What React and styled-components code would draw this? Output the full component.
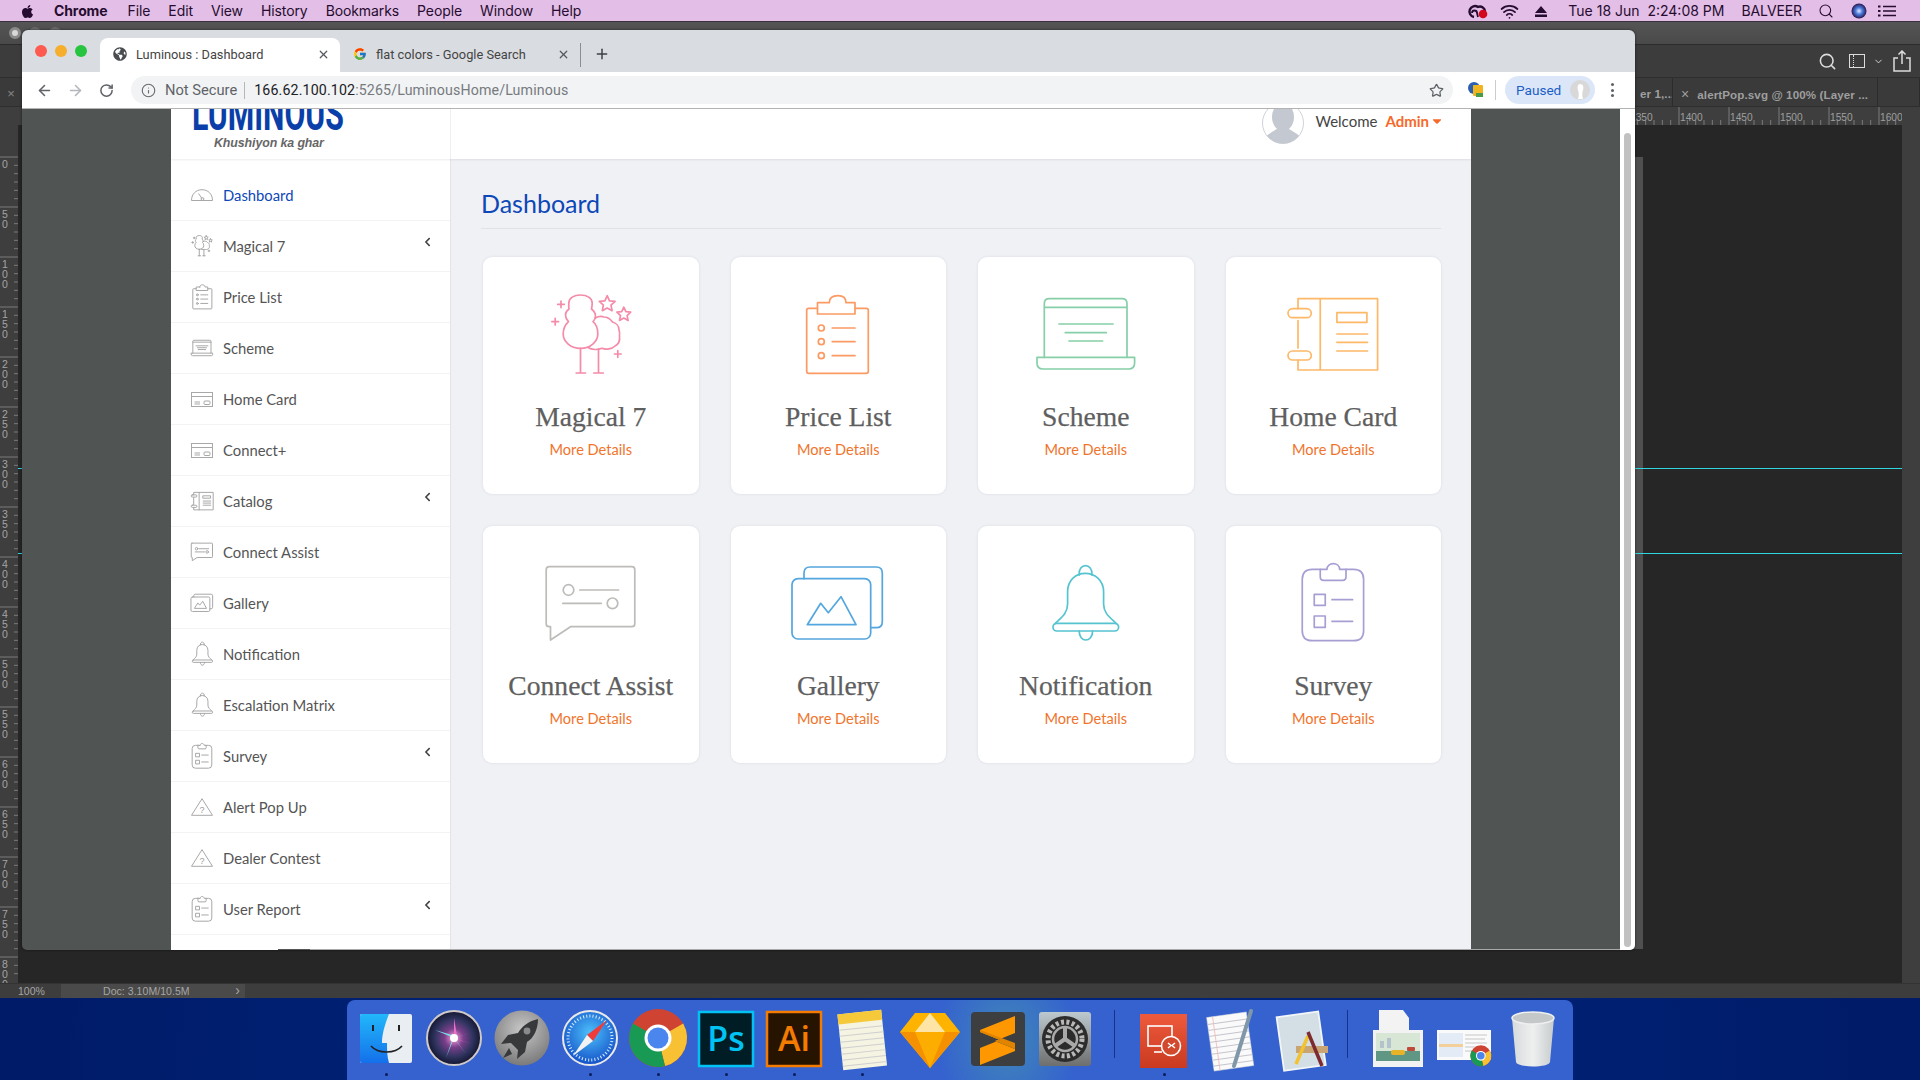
import React from "react";
import styled, { createGlobalStyle } from "styled-components";
import { ArrowLeft, ArrowRight, RotateCw, Info, Star, X, Plus, Search, Wifi, ChevronDown } from "lucide-react";
import { FaApple, FaGlobeAmericas, FaChevronLeft, FaCaretDown } from "react-icons/fa";
import { FcGoogle } from "react-icons/fc";

const Global = createGlobalStyle`
  html, body { margin: 0; padding: 0; background: #001e6e; }
  * { box-sizing: border-box; }
`;

/* ---------- desktop frame ---------- */
const Desktop = styled.div`
  width: 1920px; height: 1080px; overflow: hidden;
  display: flex; flex-direction: column;
  background: radial-gradient(ellipse at 50% 100%, #00267f 0%, #001e6e 55%, #00165a 100%);
  font-family: "Lato", "Liberation Sans", sans-serif;
`;
const MenuBar = styled.header`
  height: 22px; flex: none; display: flex; align-items: center;
  background: #e3bee6; color: #260c30;
  font: 14px/22px "Inter", "Liberation Sans", sans-serif;
  padding-left: 20px; box-shadow: inset 0 -1px 0 #3a3040;
`;
const MenuItem = styled.span`
  margin-right: ${p => p.$gap ?? 18}px;
  font-weight: ${p => (p.$bold ? 700 : 400)};
  white-space: nowrap; letter-spacing: ${p => p.$ls ?? -0.1}px;
`;
const MenuRight = styled.div`
  margin-left: auto; display: flex; align-items: center; padding-right: 24px;
`;
const MenuGlyph = styled.span`
  display: inline-flex; align-items: center; justify-content: center;
  margin-right: ${p => p.$gap ?? 12}px;
`;

/* ---------- photoshop window behind ---------- */
const Workspace = styled.main`
  position: relative; flex: none; height: 976px;
`;
const PsWindow = styled.section`
  height: 100%; display: flex; flex-direction: column; background: #3d3d3d; color: #a8a8a8;
`;
const PsTitle = styled.div`
  height: 23px; flex: none; display: flex; align-items: center; padding-left: 9px; gap: 8px;
  background: linear-gradient(#555, #4a4a4a); border-bottom: 1px solid #2c2c2c;
`;
const PsDot = styled.i`
  width: 12px; height: 12px; border-radius: 50%;
  background: ${p => (p.$on ? "#d8d8d8" : "#6c6c6c")};
  border: ${p => (p.$on ? "3px solid #8a8a8a" : "none")};
`;
const PsOptions = styled.div`
  height: 33px; flex: none; display: flex; align-items: center; justify-content: flex-end;
  padding-right: 9px; background: #3c3c3c; color: #dcdcdc; border-bottom: 1px solid #2e2e2e;
`;
const PsOptIcon = styled.span`
  display: inline-flex; margin-right: ${p => p.$r ?? 0}px;
`;
const PanelGlyph = styled.i`
  position: relative; display: block; width: 16px; height: 14px; border: 1.5px solid #dcdcdc;
  &::before { content: ""; position: absolute; left: 3px; top: 0; bottom: 0; border-left: 1.5px dotted #dcdcdc; }
`;
const PsTabs = styled.div`
  height: 29px; flex: none; display: flex; background: #3a3a3a; border-bottom: 1px solid #2e2e2e;
  font: 700 11.6px/32px "Liberation Sans", sans-serif; color: #9f9f9f;
`;
const PsLeftClose = styled.span`
  width: 22px; text-align: center; font-weight: 400; color: #888; font-size: 13px;
`;
const PsTab = styled.span`
  display: block; white-space: nowrap; overflow: hidden;
  width: ${p => p.$w}px; padding-left: ${p => p.$pad}px;
  border-right: 1px solid #2c2c2c; letter-spacing: .1px;
`;
const PsTabClose = styled.span`
  font-size: 14px; font-weight: 400; margin-right: 8px;
`;
const PsTabsFill = styled.span`
  flex: 1; display: flex; justify-content: flex-end;
`;
const PsWork = styled.div`
  flex: 1; display: flex; min-height: 0;
`;
const PsRulerV = styled.svg`
  width: 18px; height: 100%; flex: none; display: block;
  background: #3e3e3e;
`;
const PsCenter = styled.div`
  flex: 1; display: flex; flex-direction: column; min-width: 0;
`;
const PsRulerH = styled.svg`
  height: 18px; width: 100%; flex: none; display: block; background: #3e3e3e;
`;
const PsCanvas = styled.div`
  position: relative; flex: 1; background: #262626;
`;
const PsRightStrip = styled.div`
  width: 18px; flex: none; background: #3e3e3e;
`;
const Artboard = styled.div`
  position: absolute; left: 1600px; width: 25px; top: 32px; height: 792px; background: #4f4f4f;
`;
const Guide = styled.div`
  position: absolute; left: 0; right: 0; top: ${p => p.$y}px; height: 1px; background: #2fd6e0;
`;
const PsStatus = styled.footer`
  height: 15px; flex: none; display: flex; align-items: center; background: #3d3d3d;
  font: 10.5px/15px "Liberation Sans", sans-serif; color: #a6a6a6; border-top: 1px solid #333;
`;
const StatusZoom = styled.span`
  width: 61px; padding-left: 18px;
`;
const StatusDoc = styled.span`
  width: 184px; height: 100%; background: #4a4a4a; padding-left: 42px; display: flex;
  justify-content: space-between; padding-right: 5px; letter-spacing: .05px;
`;
const StatusArrow = styled.span`
  font-size: 14px; line-height: 13px;
`;

/* ---------- chrome window ---------- */
const Browser = styled.section`
  position: absolute; left: 22px; top: 8px; width: 1613px; height: 920px;
  display: flex; flex-direction: column; border-radius: 6px 6px 5px 5px; overflow: hidden;
  font-family: "Roboto", "Liberation Sans", sans-serif;
  box-shadow: 0 0 3px rgba(0,0,0,.55);
`;
const TabStrip = styled.div`
  height: 42px; flex: none; display: flex; align-items: flex-end; background: #d9dce1; padding-left: 13px;
`;
const Lights = styled.div`
  display: flex; gap: 8px; align-self: flex-start; margin: 15px 13px 0 0;
`;
const Light = styled.i`
  width: 12px; height: 12px; border-radius: 50%; background: ${p => p.$c};
`;
const Tab = styled.div`
  width: 240px; height: 34px; display: flex; align-items: center; padding: 0 10px 2px 13px; gap: 9px;
  background: ${p => (p.$active ? "#fff" : "transparent")};
  border-radius: 8px 8px 0 0; font-size: 12.8px; color: #444; white-space: nowrap;
`;
const TabName = styled.span`
  flex: 1;
`;
const TabDivider = styled.i`
  width: 1px; height: 24px; background: #8b8e93; margin: 0 13px 5px 0;
`;
const NewTab = styled.span`
  display: inline-flex; height: 34px; align-items: center; padding-bottom: 2px; color: #3c4043;
`;
const Toolbar = styled.div`
  height: 37px; flex: none; display: flex; align-items: center; background: #fff;
  border-bottom: 1px solid #b3b3b3; padding-left: 7px;
`;
const NavBtn = styled.span`
  width: 32px; display: inline-flex; justify-content: center; margin-left: -1px; color: ${p => p.$c || "#5f6368"};
`;
const Omnibox = styled.div`
  width: 1322px; height: 28px; margin-left: 9px; border-radius: 14px; background: #f1f3f4;
  display: flex; align-items: center; padding: 0 9px 0 10px; font-size: 14.2px; color: #6a6d70; white-space: nowrap;
`;
const NotSecure = styled.span`
  margin: 1px 0 0 9px; padding-right: 7px; border-right: 1px solid #b5b7ba; line-height: 17px; font-size: 14.7px; color: #5f6368;
`;
const Url = styled.span`
  margin-left: 9px; flex: 1; color: #777a7e; letter-spacing: .14px;
`;
const UrlHost = styled.b`
  font-weight: 400; color: #202124;
`;
const ExtBadge = styled.svg`
  margin-left: 15px; flex: none;
`;
const ToolSep = styled.i`
  width: 1px; height: 20px; background: #ccc; margin: 0 9px 0 11px;
`;
const PausedPill = styled.div`
  width: 90px; height: 28px; border-radius: 14px; background: #dbe7f8; display: flex; align-items: center;
  justify-content: space-between; padding: 0 5px 0 11px; color: #1b5ec6; font-size: 13.6px; font-weight: 400;
`;
const PausedFace = styled.svg`
  display: block;
`;
const Kebab = styled.span`
  margin-left: 16px; display: flex; flex-direction: column; gap: 2.5px;
`;
const KebabDot = styled.i`
  width: 3px; height: 3px; border-radius: 50%; background: #5f6368;
`;
const PageArea = styled.div`
  position: relative; flex: 1; min-height: 0; display: flex; background: #505553;
`;
const PageScroller = styled.div`
  flex: 1; display: flex; justify-content: center; overflow: hidden;
`;
const ScrollTrack = styled.div`
  width: 15px; flex: none; background: #fff; padding: 24px 4px 3px;
`;
const ScrollThumb = styled.div`
  height: 100%; background: #c1c1c1; border-radius: 4px;
`;
const HScroll = styled.div`
  position: absolute; left: 256px; right: 15px; bottom: 0; height: 1px;
  background: linear-gradient(90deg, #555 0 32px, #a9a9a9 32px);
`;

/* ---------- web page ---------- */
const Page = styled.div`
  width: 1300px; flex: none; display: flex; flex-direction: column; background: #eff1f5;
  font-family: "Lato", "Liberation Sans", sans-serif;
`;
const TopBar = styled.div`
  height: 50px; flex: none; display: flex; background: #fff; overflow: hidden;
  box-shadow: 0 1px 2px rgba(0,0,0,.08); position: relative; z-index: 1;
`;
const Brand = styled.div`
  width: 280px; flex: none; border-right: 1px solid #efefef; padding-left: 21px;
`;
const Wordmark = styled.div`
  font: 700 48px/34px "Roboto", "Liberation Sans", sans-serif; color: #0a3fa9; height: 34px; margin-top: -12px;
  transform: scaleX(.63); transform-origin: left center; white-space: nowrap;
`;
const Tagline = styled.div`
  font: italic 700 12.4px/14px "Liberation Sans", sans-serif; color: #666; margin: 5px 0 0 22px; letter-spacing: -.1px;
`;
const UserArea = styled.div`
  margin-left: auto; display: flex; align-items: center; height: 42px; margin-top: -7px; padding-right: 27px;
  font-size: 15px; color: #444;
`;
const AvatarImg = styled.svg`
  margin-right: 11px; display: block;
`;
const WelcomeText = styled.span`
  margin-bottom: 4px;
`;
const Admin = styled.span`
  margin: 0 0 4px 8px; color: #f7692b; font-weight: 700; display: inline-flex; align-items: center; gap: 1px;
`;
const Body = styled.div`
  flex: 1; display: flex; min-height: 0;
`;
const Sidebar = styled.nav`
  width: 280px; flex: none; background: #fff; padding-top: 11px; border-right: 1px solid #e3e4e6;
`;
const NavRow = styled.div`
  height: 51px; display: flex; align-items: center; padding: 0 19px 0 20px;
  border-bottom: 1px solid #f3f3f3;
  font-size: 14.8px; color: ${p => (p.$active ? "#0d47b8" : "#555")};
`;
const NavIconSlot = styled.span`
  width: 22px; height: 30px; flex: none; margin-right: 10px; display: flex; align-items: center; justify-content: center;
`;
const NavText = styled.span`
  flex: 1;
`;
const NavChevron = styled(FaChevronLeft)`
  width: 7px; height: 10px; color: #444; margin-bottom: 8px;
`;
const Content = styled.div`
  flex: 1; padding: 0 30px;
`;
const PageTitle = styled.h1`
  margin: 0; height: 70px; padding-top: 28px; border-bottom: 1px solid #e0e2e6;
  font: 400 25px/32px "Lato", "Liberation Sans", sans-serif; color: #0d47b8;
`;
const CardGrid = styled.div`
  margin-top: 28px; padding-left: 2px; display: grid;
  grid-template-columns: repeat(4, 215.5px); grid-auto-rows: 237px; gap: 32px;
`;
const Card = styled.article`
  background: #fff; border-radius: 9px; box-shadow: 0 0 3px rgba(30,40,70,.1);
  display: flex; flex-direction: column; align-items: center; padding-top: 36px;
`;
const CardTitle = styled.h2`
  margin: 25px 0 0; font: 400 27.6px/30px "Liberation Serif", serif; color: #5f5f5f;
  white-space: nowrap; -webkit-text-stroke: .25px #5f5f5f;
`;
const MoreLink = styled.a`
  margin-top: 8px; font-size: 14.6px; line-height: 20px; color: #f1742c;
`;
const CardGlyph = styled.svg.attrs({ viewBox: "-50 0 100 84", width: 100, height: 84, fill: "none" })`
  display: block; overflow: visible; flex: none;
  stroke: ${p => p.$c}; stroke-width: 1.7; stroke-linecap: round; stroke-linejoin: round;
`;
const MiniGlyph = styled.svg.attrs(p => ({ viewBox: "-50 0 100 84", width: 100 * p.$s, height: 84 * p.$s, fill: "none" }))`
  display: block; overflow: visible; flex: none;
  stroke: #a3a3a3; stroke-width: ${p => 0.95 / p.$s}; stroke-linecap: round; stroke-linejoin: round;
`;
const SmallSvg = styled.svg`
  display: block; overflow: visible; fill: none; stroke: #a8a8a8; stroke-width: 1; flex: none;
`;

/* ---------- dock ---------- */
const DockTray = styled.footer`
  height: 82px; flex: none; display: flex; justify-content: center; align-items: flex-end;
`;
const Dock = styled.div`
  width: 1226px; height: 80px; display: flex; padding-left: 5px; border-radius: 8px 8px 0 0;
  background: radial-gradient(ellipse 70px 90px at 660px 50%, #3f86b8 0%, rgba(63,134,184,0) 100%), #3562cf;
`;
const DockSlot = styled.div`
  width: ${p => p.$w || 68}px; flex: none; position: relative; display: flex; justify-content: center; padding-top: 8px;
`;
const DockDot = styled.i`
  position: absolute; left: 50%; bottom: 4px; width: 3px; height: 3px; margin-left: -1.5px; border-radius: 50%; background: #0b1a55;
`;
const DockSep = styled.i`
  width: 1px; height: 48px; flex: none; background: #17328a; margin: 10px ${p => p.$r}px 0 ${p => p.$l}px;
`;
const AppSvg = styled.svg.attrs({ viewBox: "0 0 60 60", width: 60, height: 60 })`
  display: block; overflow: visible;
`;
const AppLabel = styled.text`
  font-family: "Open Sans", "Liberation Sans", sans-serif; font-size: 34px; font-weight: 600;
`;

/* ---------- line art shared by cards and sidebar ---------- */
const starPts = (cx, cy, R) => {
  const pts = [];
  for (let i = 0; i < 10; i++) {
    const a = -Math.PI / 2 + (i * Math.PI) / 5;
    const r = i % 2 ? R * 0.48 : R;
    pts.push(`${(cx + r * Math.cos(a)).toFixed(1)},${(cy + r * Math.sin(a)).toFixed(1)}`);
  }
  return pts.join(" ");
};
const TreeArt = () => (
  <>
    <path d="M-10.5 55.3C-21 55.3-27.8 48-27.8 41C-27.8 35-25 31-22.5 28.7C-25 26-25.5 23-25.5 22C-25.5 19-23.5 17-22 16C-22.5 14-22.2 11-22.2 10C-22.2 5-17 2-10.5 2C-4 2 1.2 5 1.2 10C1.2 12 1 14 .5 16C3 18 4.5 20 4.5 23C4.5 25 3.5 27 2 28.7C5 31 6.8 35 6.8 41C6.8 48 0 55.3-10.5 55.3Z" />
    <path d="M4.5 25C7 23.5 10 23 13 24C17 24 20 27 21.5 29C25 30 27.8 33 27.8 36C28.5 38 28.8 41 28.5 43C29 47 28 51 24 53C21 56 15 57 11 55.3C7 57 1 57-3 54.5" />
    <path d="M-10.5 55.3V80M-14.8 80H-5.5M7.5 56V80M2.8 80H12.2" />
    <polygon points={starPts(16.2, 11, 8.3)} />
    <polygon points={starPts(32.8, 21.5, 7.3)} />
    <path d="M-30 8V14.6M-33.3 11.3H-26.7M-35.8 25.4V32M-39.1 28.7H-32.5M26.8 57.7V64.3M23.5 61H30.1" />
  </>
);
const PriceArt = () => (
  <>
    <path d="M-20.5 15.3H-29.3Q-31.3 15.3-31.3 17.3V78.3Q-31.3 80.3-29.3 80.3H28.3Q30.3 80.3 30.3 78.3V17.3Q30.3 15.3 28.3 15.3H17" />
    <path d="M-8.7 9.7H-20.5V21H17V9.7H8C8 5 5 2.7 0 2.7C-5.5 2.7-8.7 5-8.7 9.7Z" />
    <circle cx="-16.7" cy="35" r="3" /><circle cx="-16.7" cy="48.7" r="3" /><circle cx="-16.7" cy="62.7" r="3" />
    <path d="M-5.7 35H17M-5.7 48.7H17M-5.7 62.7H17" />
  </>
);
const LaptopArt = () => (
  <>
    <path d="M-41.7 64.3V10.7Q-41.7 5.7-36.7 5.7H36Q41 5.7 41 10.7V64.3M-41.7 14.3H41" />
    <path d="M-27 31H27M-20.7 39.7H20.3M-17 48H16.6" />
    <path d="M-49 64.3H48.6V70Q48.6 76 42.6 76H-43Q-49 76-49 70Z" />
  </>
);
const BinderArt = () => (
  <>
    <path d="M-35 15.7V5.7H44.6V77H-35V67M-35 27.5V55M-12.75 5.7V77" />
    <rect x="-45" y="15.7" width="23.3" height="9" rx="4.5" />
    <rect x="-45" y="58" width="23.3" height="9" rx="4.5" />
    <rect x="3.9" y="19.7" width="30" height="9.6" />
    <path d="M3.9 41H34.5M3.9 49.3H34.5M3.9 58H34.5" />
  </>
);
const BubbleArt = () => (
  <>
    <path d="M-41.8 4.7H40.8Q43.8 4.7 43.8 7.7V61.7Q43.8 64.7 40.8 64.7H-20.5L-40.5 78V64.7H-41.8Q-44.8 64.7-44.8 61.7V7.7Q-44.8 4.7-41.8 4.7Z" />
    <circle cx="-22.5" cy="28" r="5.3" /><circle cx="21.5" cy="41.3" r="5.3" />
    <path d="M-11.2 28H27.5M-28.2 41.3H10.2" />
  </>
);
const GalleryArt = () => (
  <>
    <rect x="-46" y="16.7" width="78.7" height="60.3" rx="6" />
    <path d="M-34 16.7V11Q-34 5-28 5H38.3Q44.3 5 44.3 11V59.7Q44.3 65.7 38.3 65.7H32.7" />
    <path d="M-30.7 62.7L-17.3 41.3L-9.7 50.7L3 34.7L18 62.7Z" />
  </>
);
const BellArt = () => (
  <>
    <rect x="-33" y="61.3" width="65.6" height="7.7" rx="3.8" />
    <path d="M-30.75 61.3C-24 55-18.4 51-18.4 42V29.7C-18.4 18-10 11.3-.75 11.3C8.5 11.3 17.6 18 17.6 29.7V42C17.6 51 23.5 55 30 61.3" />
    <path d="M-6.75 13C-7.5 7-4 3.7-.4 3.7C3 3.7 6.5 7 5.9 13" />
    <path d="M-6.75 69C-7 75-3.5 78-.2 78C3 78 6.8 75 6.6 69" />
  </>
);
const SurveyArt = () => (
  <>
    <path d="M-12.75 7.3H-20.75Q-30.75 7.3-30.75 17.3V68.7Q-30.75 78.7-20.75 78.7H20.6Q30.6 78.7 30.6 68.7V17.3Q30.6 7.3 20.6 7.3H13" />
    <path d="M-12.75 7.3V14.7Q-12.75 18.3-9.4 18.3H9.6Q13 18.3 13 14.7V7.3H6.6C6.6 3.5 3.5 1.7 .3 1.7C-3 1.7-6 3.5-6 7.3Z" />
    <rect x="-18.75" y="32.3" width="11" height="11" />
    <rect x="-18.75" y="54" width="11" height="11.3" />
    <path d="M-1 37.7H19.6M-1 59.3H19.6" />
  </>
);
const GaugeIcon = () => (
  <SmallSvg width="22" height="12" viewBox="0 0 22 12">
    <path d="M.5 11.5C.5 5 5 .7 11 .7C17 .7 21.5 5 21.5 11.5ZM7.5 4.5L11 9.5" />
    <circle cx="11.5" cy="10" r="1.4" />
  </SmallSvg>
);
const CardIcon = () => (
  <SmallSvg width="22" height="15" viewBox="0 0 22 15">
    <rect x=".5" y=".5" width="21" height="14" /><path d="M.5 4.5H21.5M3.5 10H9M3.5 12H9" /><rect x="13" y="9" width="6" height="3.5" rx="1" />
  </SmallSvg>
);
const AlertIcon = () => (
  <SmallSvg width="22" height="18" viewBox="0 0 22 18">
    <path d="M11 .7L21.5 17.3H.5Z" />
    <text x="11" y="15" textAnchor="middle" fontSize="9" fill="#9b9b9b" stroke="none" fontFamily="Liberation Sans">?</text>
  </SmallSvg>
);

const navItems = [
  { t: "Dashboard", icon: <GaugeIcon />, active: true },
  { t: "Magical 7", icon: <MiniGlyph $s={0.26}><TreeArt /></MiniGlyph>, sub: true },
  { t: "Price List", icon: <MiniGlyph $s={0.31}><PriceArt /></MiniGlyph> },
  { t: "Scheme", icon: <MiniGlyph $s={0.22}><LaptopArt /></MiniGlyph> },
  { t: "Home Card", icon: <CardIcon /> },
  { t: "Connect+", icon: <CardIcon /> },
  { t: "Catalog", icon: <MiniGlyph $s={0.245}><BinderArt /></MiniGlyph>, sub: true },
  { t: "Connect Assist", icon: <MiniGlyph $s={0.24}><BubbleArt /></MiniGlyph> },
  { t: "Gallery", icon: <MiniGlyph $s={0.24}><GalleryArt /></MiniGlyph> },
  { t: "Notification", icon: <MiniGlyph $s={0.31}><BellArt /></MiniGlyph> },
  { t: "Escalation Matrix", icon: <MiniGlyph $s={0.31}><BellArt /></MiniGlyph> },
  { t: "Survey", icon: <MiniGlyph $s={0.32}><SurveyArt /></MiniGlyph>, sub: true },
  { t: "Alert Pop Up", icon: <AlertIcon /> },
  { t: "Dealer Contest", icon: <AlertIcon /> },
  { t: "User Report", icon: <MiniGlyph $s={0.32}><SurveyArt /></MiniGlyph>, sub: true },
];
const cards = [
  { t: "Magical 7", c: "#f48ba9", A: TreeArt },
  { t: "Price List", c: "#fb9a63", A: PriceArt },
  { t: "Scheme", c: "#86cfa8", A: LaptopArt },
  { t: "Home Card", c: "#fdb868", A: BinderArt },
  { t: "Connect Assist", c: "#bdbcb8", A: BubbleArt },
  { t: "Gallery", c: "#54a6de", A: GalleryArt },
  { t: "Notification", c: "#56c4d0", A: BellArt },
  { t: "Survey", c: "#a79fd4", A: SurveyArt },
];

/* ---------- dock artwork ---------- */
const FinderApp = () => (
  <AppSvg>
    <defs><linearGradient id="fb" x1="0" y1="0" x2="0" y2="1"><stop offset="0" stopColor="#22b8fb" /><stop offset="1" stopColor="#1470ea" /></linearGradient></defs>
    <rect x="4" y="6" width="52" height="49" rx="2" fill="#e9eef3" />
    <path d="M6 6H33C29 16 26 26 26 35H31C31 42 31 48 33 55H6Q4 55 4 53V8Q4 6 6 6Z" fill="url(#fb)" />
    <path d="M17 17V23M43 17V23" stroke="#222" strokeWidth="2" />
    <path d="M15 38C22 46 39 46 46 38" fill="none" stroke="#222" strokeWidth="1.6" />
  </AppSvg>
);
const SiriApp = () => (
  <AppSvg>
    <defs><radialGradient id="sr" cx=".5" cy=".5" r=".5"><stop offset="0" stopColor="#ff9fe0" /><stop offset=".35" stopColor="#7a3f8a" /><stop offset=".7" stopColor="#2f3460" /><stop offset="1" stopColor="#14162e" /></radialGradient></defs>
    <circle cx="30" cy="30" r="27" fill="url(#sr)" stroke="#cfc9c9" strokeWidth="2" />
    <path d="M30 30L11 22L28 27ZM30 30L50 24L33 29ZM30 30L42 46L32 32ZM30 30L22 50L28 32Z" fill="#7be0e6" />
    <path d="M30 30L30 10L33 28ZM30 30L48 36L32 31Z" fill="#e673c7" />
    <circle cx="30" cy="30" r="4" fill="#fff" />
  </AppSvg>
);
const RocketApp = () => (
  <AppSvg>
    <defs><radialGradient id="lp" cx=".5" cy=".35" r=".7"><stop offset="0" stopColor="#c8c8c8" /><stop offset="1" stopColor="#747474" /></radialGradient></defs>
    <circle cx="30" cy="30" r="27.5" fill="url(#lp)" />
    <path d="M46 11C37 13 30 18 26 25L16 27L9 36L19 35L26 42L25 51L33 44L35 34C42 30 46 21 46 11Z" fill="#37393b" />
    <circle cx="35" cy="23" r="3.4" fill="#8a8a8a" />
    <path d="M17 40L11 50L20 46Z" fill="#37393b" />
  </AppSvg>
);
const SafariApp = () => (
  <AppSvg>
    <defs><radialGradient id="sf" cx=".5" cy=".4" r=".6"><stop offset="0" stopColor="#4cc0fa" /><stop offset="1" stopColor="#1450c8" /></radialGradient></defs>
    <circle cx="30" cy="30" r="27" fill="url(#sf)" stroke="#e9e9e9" strokeWidth="2" />
    <circle cx="30" cy="30" r="22" fill="none" stroke="#d7eeff" strokeWidth="3" strokeDasharray="1 2.2" />
    <path d="M47 12L27 27L33 33Z" fill="#f03b3b" />
    <path d="M13 48L27 27L33 33Z" fill="#f2f2f2" />
  </AppSvg>
);
const ChromeApp = () => (
  <AppSvg>
    <circle cx="30" cy="30" r="29" fill="#cf4332" />
    <path d="M30 30L55.2 15.5A29 29 0 0 1 37 58.1L30 30Z" fill="#f8c033" />
    <path d="M30 30L37 58.1A29 29 0 0 1 5 15.5Z" fill="#199a54" />
    <circle cx="30" cy="30" r="13.5" fill="#fff" />
    <circle cx="30" cy="30" r="10.5" fill="#4a86ed" />
  </AppSvg>
);
const PsApp = () => (
  <AppSvg>
    <rect x="3" y="4" width="54" height="54" fill="#001d26" stroke="#00c2f3" strokeWidth="2.5" />
    <AppLabel x="30" y="43" textAnchor="middle" fill="#00c2f3">Ps</AppLabel>
  </AppSvg>
);
const AiApp = () => (
  <AppSvg>
    <rect x="3" y="4" width="54" height="54" fill="#261300" stroke="#f37b00" strokeWidth="2.5" />
    <AppLabel x="30" y="43" textAnchor="middle" fill="#f37b00">Ai</AppLabel>
  </AppSvg>
);
const NotesApp = () => (
  <AppSvg>
    <g transform="rotate(-6 30 30)">
      <rect x="8" y="4" width="44" height="56" fill="#f5f3e2" />
      <rect x="8" y="4" width="44" height="10" fill="#f6c93a" />
      <path d="M8 20H52M8 26H52M8 32H52M8 38H52M8 44H52M8 50H52M8 56H52" stroke="#cfcfcf" strokeWidth="1" />
    </g>
  </AppSvg>
);
const SketchApp = () => (
  <AppSvg>
    <path d="M15 5H45L60 24L30 60L0 24Z" fill="#fdb300" />
    <path d="M0 24H60L30 60Z" fill="#f59100" />
    <path d="M15 24H45L30 60Z" fill="#fdad00" />
    <path d="M30 5L45 24H15Z" fill="#fee5a5" />
  </AppSvg>
);
const SublimeApp = () => (
  <AppSvg>
    <rect x="3" y="4" width="54" height="54" rx="4" fill="#3c3e40" />
    <path d="M12 22L47 8V25L27 33L47 41V43L12 57V40L32 32L12 24Z" fill="#ff9800" />
    <path d="M27 33L32 32L12 24V22L47 35V41Z" fill="#e08400" />
  </AppSvg>
);
const PrefsApp = () => (
  <AppSvg>
    <defs><linearGradient id="pf" x1="0" y1="0" x2="0" y2="1"><stop offset="0" stopColor="#bcc9cf" /><stop offset="1" stopColor="#6e6e6e" /></linearGradient></defs>
    <rect x="3" y="4" width="52" height="54" rx="3" fill="url(#pf)" />
    <circle cx="29" cy="31" r="23" fill="#2c2c2c" />
    <circle cx="29" cy="31" r="17" fill="none" stroke="#b8b8b8" strokeWidth="5" strokeDasharray="3 2.4" />
    <circle cx="29" cy="31" r="12" fill="none" stroke="#a9a9a9" strokeWidth="2.5" />
    <path d="M29 31V19M29 31L19 38M29 31L39 38" stroke="#a9a9a9" strokeWidth="4" />
  </AppSvg>
);
const RdpApp = () => (
  <AppSvg>
    <defs><linearGradient id="rd" x1="0" y1="0" x2="0" y2="1"><stop offset="0" stopColor="#ee5a3c" /><stop offset="1" stopColor="#c93a21" /></linearGradient></defs>
    <rect x="6" y="6" width="47" height="54" fill="url(#rd)" />
    <rect x="14" y="18" width="24" height="20" fill="none" stroke="#fff" strokeWidth="1.6" />
    <path d="M20 44H28" stroke="#fff" strokeWidth="1.6" />
    <circle cx="37" cy="38" r="9.5" fill="#d24a2e" stroke="#fff" strokeWidth="1.6" />
    <path d="M34 35L37 37.5L34 40M41 35L38 37.5L41 40" fill="none" stroke="#fff" strokeWidth="1.4" />
  </AppSvg>
);
const TextEditApp = () => (
  <AppSvg>
    <g transform="rotate(-8 30 32)">
      <rect x="6" y="6" width="40" height="54" fill="#fafafa" stroke="#ddd" strokeWidth=".5" />
      <path d="M6 13H46M6 19H46M6 25H46M6 31H46M6 37H46M6 43H46M6 49H46M6 55H46" stroke="#b9b9c4" strokeWidth=".8" />
      <path d="M12 6V60" stroke="#f1b8b8" strokeWidth=".8" />
    </g>
    <path d="M47 3L30 58" stroke="#7f97a8" strokeWidth="4" strokeLinecap="round" />
  </AppSvg>
);
const ScriptApp = () => (
  <AppSvg>
    <g transform="rotate(-8 28 32)">
      <rect x="6" y="6" width="42" height="54" fill="#d3dee5" stroke="#f2f6f8" strokeWidth="1.8" />
    </g>
    <rect x="22" y="38" width="32" height="7" fill="#c8a572" />
    <path d="M34 28L22 56" stroke="#f2c230" strokeWidth="3.5" />
    <path d="M34 24L48 58" stroke="#7d2b30" strokeWidth="3.5" />
  </AppSvg>
);
const PhotoApp = () => (
  <AppSvg>
    <path d="M12 2H36L42 10V26H12Z" fill="#f3f3f3" />
    <rect x="6" y="22" width="50" height="37" fill="#f2f2f2" />
    <rect x="9" y="25" width="44" height="28" fill="#d7e6d5" />
    <rect x="9" y="43" width="44" height="10" fill="#5f9684" />
    <path d="M13 40V33H17V40M20 40V30H24V40" fill="#b4c2cb" />
    <rect x="24" y="42" width="14" height="5" rx="2" fill="#e8b327" />
    <rect x="40" y="39" width="8" height="4" rx="1" fill="#c04a3a" />
  </AppSvg>
);
const ShotApp = () => (
  <AppSvg>
    <rect x="2" y="22" width="54" height="30" fill="#fafafa" />
    <rect x="4" y="25" width="24" height="24" fill="#e3ebf6" />
    <path d="M30 27H52M30 31H50M30 35H52M30 39H48M30 43H52" stroke="#c5c5c5" strokeWidth="1.2" />
    <rect x="4" y="36" width="24" height="3" fill="#f3cf9a" />
    <g transform="translate(35 37) scale(.36)">
      <circle cx="30" cy="30" r="29" fill="#cf4332" />
      <path d="M30 30L55.2 15.5A29 29 0 0 1 37 58.1L30 30Z" fill="#f8c033" />
      <path d="M30 30L37 58.1A29 29 0 0 1 5 15.5Z" fill="#199a54" />
      <circle cx="30" cy="30" r="13.5" fill="#fff" />
      <circle cx="30" cy="30" r="10.5" fill="#4a86ed" />
    </g>
  </AppSvg>
);
const TrashApp = () => (
  <AppSvg>
    <defs><linearGradient id="tr" x1="0" y1="0" x2="1" y2="0"><stop offset="0" stopColor="#d7dadb" /><stop offset=".5" stopColor="#eef0f0" /><stop offset="1" stopColor="#c7cbcc" /></linearGradient></defs>
    <path d="M9 10C9 4 51 4 51 10L47 54C46 60 14 60 13 54Z" fill="url(#tr)" />
    <ellipse cx="30" cy="10" rx="21" ry="6" fill="#c4c8c9" stroke="#eef0f0" strokeWidth="1.5" />
  </AppSvg>
);

const dockA = [
  [FinderApp, 1], [SiriApp, 0], [RocketApp, 0], [SafariApp, 1], [ChromeApp, 1], [PsApp, 1], [AiApp, 1], [NotesApp, 1], [SketchApp, 0], [SublimeApp, 0], [PrefsApp, 0],
];
const dockB = [[RdpApp, 1], [TextEditApp, 0], [ScriptApp, 0]];
const dockC = [[PhotoApp, 0], [ShotApp, 0], [TrashApp, 0]];

const hTicks = [];
for (let x = 1629; x <= 1902; x += 50 / 6) hTicks.push(x);
const hLabels = [1350, 1400, 1450, 1500, 1550, 1600];
const vLabels = Array.from({ length: 17 }, (_, i) => i * 50);
const vTicks = [];
for (let y = 0; y <= 825; y += 50 / 6) vTicks.push(y);

export default function App() {
  return (
    <Desktop>
      <Global />
      <MenuBar>
        <MenuGlyph $gap={19}><FaApple size={15} /></MenuGlyph>
        <MenuItem $bold $gap={20}>Chrome</MenuItem>
        {["File", "Edit", "View", "History", "Bookmarks", "People", "Window", "Help"].map(m => <MenuItem key={m}>{m}</MenuItem>)}
        <MenuRight>
          <MenuGlyph $gap={11}>
            <svg width="22" height="16" viewBox="0 0 22 16">
              <path d="M7 14A5.5 5.5 0 1 1 11 4A5 5 0 0 1 18 8" fill="none" stroke="#260c30" strokeWidth="2.4" />
              <path d="M5 10A2.5 2.5 0 0 1 10 10L11 14" fill="none" stroke="#260c30" strokeWidth="1.8" />
              <circle cx="16" cy="11" r="4.3" fill="#d5071c" />
            </svg>
          </MenuGlyph>
          <MenuGlyph $gap={16}><Wifi size={19} strokeWidth={2.2} /></MenuGlyph>
          <MenuGlyph $gap={21}>
            <svg width="12" height="11" viewBox="0 0 12 11"><path d="M6 0L12 7H0Z M0 8.5H12V11H0Z" fill="#260c30" /></svg>
          </MenuGlyph>
          <MenuItem $gap={17} $ls={0}>Tue 18 Jun&nbsp;&nbsp;2:24:08 PM</MenuItem>
          <MenuItem $gap={16}>BALVEER</MenuItem>
          <MenuGlyph $gap={17}><Search size={16} strokeWidth={1.6} /></MenuGlyph>
          <MenuGlyph $gap={11}>
            <svg width="16" height="18" viewBox="0 0 16 18">
              <defs><radialGradient id="ms"><stop offset="0" stopColor="#e9e6ff" /><stop offset=".45" stopColor="#4b7fe0" /><stop offset="1" stopColor="#2a1550" /></radialGradient></defs>
              <circle cx="8" cy="9" r="7.5" fill="url(#ms)" />
            </svg>
          </MenuGlyph>
          <MenuGlyph $gap={0}>
            <svg width="18" height="12" viewBox="0 0 18 12"><path d="M5 1.5H18M5 6H18M5 10.5H18" stroke="#260c30" strokeWidth="1.6" /><path d="M0 1.5H2.5M0 6H2.5M0 10.5H2.5" stroke="#260c30" strokeWidth="2" /></svg>
          </MenuGlyph>
        </MenuRight>
      </MenuBar>

      <Workspace>
        <PsWindow>
          <PsTitle><PsDot $on /><PsDot /><PsDot /></PsTitle>
          <PsOptions>
            <PsOptIcon $r={12}><Search size={19} strokeWidth={2} /></PsOptIcon>
            <PsOptIcon $r={8}><PanelGlyph /></PsOptIcon>
            <PsOptIcon $r={9}><ChevronDown size={11} /></PsOptIcon>
            <svg width="18" height="22" viewBox="0 0 18 22" fill="none" stroke="#dcdcdc" strokeWidth="1.5"><path d="M5 8H1V21H17V8H13M9 14V1M5.5 4.5L9 1L12.5 4.5" /></svg>
          </PsOptions>
          <PsTabs>
            <PsLeftClose>×</PsLeftClose>
            <PsTabsFill>
              <PsTab $w={38} $pad={5}>er 1,...</PsTab>
              <PsTab $w={205} $pad={8}><PsTabClose>×</PsTabClose>alertPop.svg @ 100% (Layer ...</PsTab>
              <PsTab $w={42} $pad={0} />
            </PsTabsFill>
          </PsTabs>
          <PsWork>
            <PsRulerV>
              {vTicks.map((y, i) => {
                const yy = 50 + y;
                const major = i % 6 === 0;
                return <line key={i} x1={major ? 0 : 14} x2="18" y1={yy} y2={yy} stroke="#8a8a8a" strokeWidth=".8" />;
              })}
              {vLabels.map(n => (
                <text key={n} fontSize="10.5" fontFamily="Liberation Sans" fill="#a4a4a4" textAnchor="middle">
                  {String(n).split("").map((d, i) => <tspan key={i} x="5" y={50 + n + 11 + i * 10}>{d}</tspan>)}
                </text>
              ))}
            </PsRulerV>
            <PsCenter>
              <PsRulerH>
                {hTicks.map((x, i) => {
                  const major = i % 6 === 0;
                  return <line key={i} x1={x - 18} x2={x - 18} y1={major ? 0 : 13} y2="18" stroke="#8a8a8a" strokeWidth=".8" />;
                })}
                {hLabels.map(n => <text key={n} x={n + 279 - 18 + 1} y="14.2" fontSize="10.2" fontFamily="Liberation Sans" fill="#9e9e9e">{n}</text>)}
              </PsRulerH>
              <PsCanvas>
                <Artboard />
                <Guide $y={343} />
                <Guide $y={428} />
              </PsCanvas>
            </PsCenter>
            <PsRightStrip />
          </PsWork>
          <PsStatus>
            <StatusZoom>100%</StatusZoom>
            <StatusDoc>Doc: 3.10M/10.5M<StatusArrow>›</StatusArrow></StatusDoc>
          </PsStatus>
        </PsWindow>

        <Browser>
          <TabStrip>
            <Lights><Light $c="#fd5b50" /><Light $c="#f6ae2d" /><Light $c="#27c43f" /></Lights>
            <Tab $active>
              <FaGlobeAmericas size={14} color="#4a4d50" />
              <TabName>Luminous : Dashboard</TabName>
              <X size={13} color="#55585c" strokeWidth={2.2} />
            </Tab>
            <Tab>
              <FcGoogle size={14} />
              <TabName>flat colors - Google Search</TabName>
              <X size={13} color="#55585c" strokeWidth={2.2} />
            </Tab>
            <TabDivider />
            <NewTab><Plus size={16} strokeWidth={2.2} /></NewTab>
          </TabStrip>
          <Toolbar>
            <NavBtn $c="#5f6368"><ArrowLeft size={17} strokeWidth={2.2} /></NavBtn>
            <NavBtn $c="#b3b6ba"><ArrowRight size={17} strokeWidth={2.2} /></NavBtn>
            <NavBtn $c="#5f6368"><RotateCw size={15} strokeWidth={2.4} /></NavBtn>
            <Omnibox>
              <Info size={15} strokeWidth={1.8} />
              <NotSecure>Not Secure</NotSecure>
              <Url><UrlHost>166.62.100.102</UrlHost>:5265/LuminousHome/Luminous</Url>
              <Star size={15} strokeWidth={2} color="#5f6368" />
            </Omnibox>
            <ExtBadge width="16" height="16" viewBox="0 0 16 16">
              <circle cx="6" cy="6" r="6" fill="#2a5fb0" />
              <rect x="5" y="3" width="10" height="11" rx="1" fill="#f0b420" />
              <rect x="8" y="11" width="7" height="4" fill="#4a9a4a" />
            </ExtBadge>
            <ToolSep />
            <PausedPill>
              Paused
              <PausedFace width="20" height="20" viewBox="0 0 20 20">
                <circle cx="10" cy="10" r="10" fill="#d8d8d8" />
                <path d="M10 4C13 4 14 7 13 10C12 13 12 16 13 19L8 19C9 16 9 13 8 10C7 7 8 4 10 4Z" fill="#fff" />
              </PausedFace>
            </PausedPill>
            <Kebab><KebabDot /><KebabDot /><KebabDot /></Kebab>
          </Toolbar>
          <PageArea>
            <PageScroller>
              <Page>
                <TopBar>
                  <Brand>
                    <Wordmark>LUMINOUS</Wordmark>
                    <Tagline>Khushiyon ka ghar</Tagline>
                  </Brand>
                  <UserArea>
                    <AvatarImg width="42" height="42" viewBox="0 0 42 42">
                      <defs><clipPath id="av"><circle cx="21" cy="21" r="20.5" /></clipPath></defs>
                      <circle cx="21" cy="21" r="20.5" fill="#fff" stroke="#cfd2d8" />
                      <g clipPath="url(#av)" fill="#c4c8d0">
                        <ellipse cx="21" cy="15" rx="11" ry="14" />
                        <path d="M0 42C2 32 12 30 16 26H26C30 30 40 32 42 42Z" />
                      </g>
                    </AvatarImg>
                    <WelcomeText>Welcome</WelcomeText>
                    <Admin>Admin<FaCaretDown size={14} /></Admin>
                  </UserArea>
                </TopBar>
                <Body>
                  <Sidebar>
                    {navItems.map(n => (
                      <NavRow key={n.t} $active={n.active}>
                        <NavIconSlot>{n.icon}</NavIconSlot>
                        <NavText>{n.t}</NavText>
                        {n.sub && <NavChevron />}
                      </NavRow>
                    ))}
                  </Sidebar>
                  <Content>
                    <PageTitle>Dashboard</PageTitle>
                    <CardGrid>
                      {cards.map(({ t, c, A }) => (
                        <Card key={t}>
                          <CardGlyph $c={c}><A /></CardGlyph>
                          <CardTitle>{t}</CardTitle>
                          <MoreLink>More Details</MoreLink>
                        </Card>
                      ))}
                    </CardGrid>
                  </Content>
                </Body>
              </Page>
            </PageScroller>
            <ScrollTrack><ScrollThumb /></ScrollTrack>
            <HScroll />
          </PageArea>
        </Browser>
      </Workspace>

      <DockTray>
        <Dock>
          {dockA.map(([A, d], i) => <DockSlot key={i}><A />{d ? <DockDot /> : null}</DockSlot>)}
          <DockSep $l={14} $r={14} />
          {dockB.map(([A, d], i) => <DockSlot key={i} $w={70}><A />{d ? <DockDot /> : null}</DockSlot>)}
          <DockSep $l={8} $r={15} />
          {dockC.map(([A, d], i) => <DockSlot key={i}><A />{d ? <DockDot /> : null}</DockSlot>)}
        </Dock>
      </DockTray>
    </Desktop>
  );
}
